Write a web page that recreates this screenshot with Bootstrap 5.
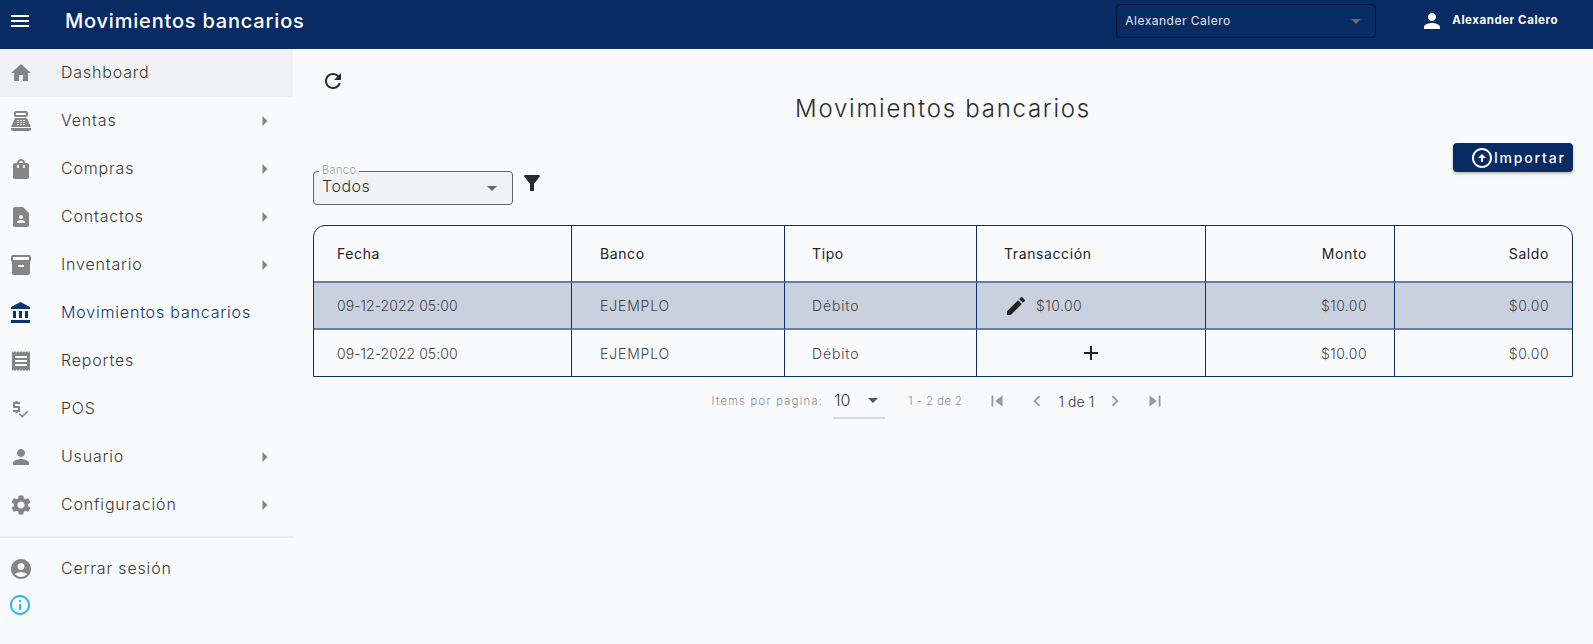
<!DOCTYPE html>
<html lang="es">
<head>
  <meta charset="UTF-8">
  <title>Movimientos bancarios</title>
  <link href="https://cdn.jsdelivr.net/npm/bootstrap@5.3.0/dist/css/bootstrap.min.css" rel="stylesheet">
  <style>
    html, body { height: 100%; overflow: hidden; }
    body { font-family: "Inter", "Open Sans", sans-serif; background: #f9fafc; color: #2b2b2b; font-weight: 300; }
    .ico { width: 24px; height: 24px; fill: currentColor; flex: none; }

    .topbar { height: 49px; background: #082b63; color: #fff; padding: 0 35px 7px 0; }
    .topbar-title { font-size: 20px; font-weight: 500; letter-spacing: .8px; margin-left: 33px; }
    .org-select { width: 260px; height: 34px; margin-right: 44px; padding: 0 14px 0 8px; background: transparent; border: 1px solid #04173a; border-radius: 4px; font-size: 12px; font-weight: 400; letter-spacing: .5px; color: #e3e7ee; }
    .org-select i { border: 5px solid transparent; border-top-color: #6d6d66; border-bottom: 0; }
    .user-name { font-size: 11.5px; font-weight: 700; letter-spacing: .55px; margin-left: 8px; }

    .shell { height: calc(100% - 49px); }
    .side { width: 293px; flex: none; }
    .side-item { height: 48px; padding: 0 22px 2px 9px; background: transparent; border: 0; border-radius: 0 !important; color: #3a3a3a; font-size: 16px; letter-spacing: .82px; gap: 28px; }
    .side-item .ico { color: #858585; margin-top: 2px; }
    .side-item .car { margin-left: auto; width: 20px; height: 20px; margin-right: -4px; }
    .side-item.is-hover { background: #f0f1f3; }
    .side-item.is-current, .side-item.is-current .ico { color: #0d3472; }
    .side-rule { border-top: 2px solid #eaebee; margin: 7px 0 7px; }
    .info-ico { color: #2bb6f6; margin: 0 0 0 8px; display: block; }

    .content { padding: 20px 20px 0; min-width: 0; }
    .refresh-ico { margin-left: 8px; }
    .page-title { font-size: 24px; font-weight: 300; letter-spacing: 1.75px; text-align: center; margin: 1px 0 0; line-height: 30px; }
    .btn-import { width: 120px; height: 29px; background: #082b63; color: #fff; border: 0; border-radius: 4px; box-shadow: 0 2px 3px rgba(0,0,0,.25); font-size: 14px; font-weight: 500; letter-spacing: 1.8px; padding: 0 4px 0 17px; gap: 0; margin-top: 19px; }
    .filter-row { margin-top: -8px; height: 48px; gap: 7px; }
    .filter-ico { margin-top: 7px; }
    .bank-box { position: relative; width: 200px; height: 34px; margin-top: 7px; }
    .bank-box label { position: absolute; top: -7px; left: 6px; padding: 0 3px; background: #f9fafc; font-size: 11px; line-height: 12px; color: #9c9c9c; letter-spacing: .4px; }
    .bank-select { height: 34px; padding: 2px 30px 6px 8px; font-size: 16px; font-weight: 300; letter-spacing: .5px; color: #333; background-color: #f0f3f6; border: 1px solid #666; border-radius: 4px; background-image: url("data:image/svg+xml,%3Csvg xmlns='http://www.w3.org/2000/svg' viewBox='0 0 10 5'%3E%3Cpath fill='%23666' d='M0 0l5 5 5-5z'/%3E%3C/svg%3E"); background-size: 10px 5px; background-position: right 15px center; }

    .grid-wrap { margin-top: 13px; border: 1px solid #0c2f69; border-radius: 12px 12px 0 0; overflow: hidden; }
    .grid-table { margin: 0; table-layout: fixed; --bs-table-bg: transparent; border-collapse: separate; border-spacing: 0; font-size: 14px; letter-spacing: .42px; }
    .grid-table th, .grid-table td { border: 0; border-right: 1px solid #0c2f69; vertical-align: middle; padding: 0 23px; color: #444; font-weight: 300; height: 46px; }
    .grid-table th { height: 57px; color: #222; font-weight: 400; letter-spacing: .6px; border-bottom: 2px solid #6b7fa4; }
    .grid-table th:last-child, .grid-table td:last-child { border-right: 0; }
    .grid-table .row-picked td { height: 47px; background: #c9d0de; border-bottom: 2px solid #6b7fa4; }
    .grid-table tr > :nth-child(2) { padding-left: 28px; }
    .grid-table tr > :nth-child(3), .grid-table tr > :nth-child(4) { padding-left: 27px; }
    .grid-table tr > :nth-child(4) { padding-right: 27px; }
    .grid-table tr > :nth-child(5) { padding-right: 27px; }
    .grid-table td:nth-child(1) { letter-spacing: .04px; }
    .grid-table td:nth-child(2), .grid-table td:nth-child(3) { letter-spacing: .85px; }
    .amount-edit { gap: 8px; }
    .amount-edit .ico { color: #222; }
    .add-ico { color: #222; display: block; margin: 0 auto; }

    .pager { height: 48px; padding-right: 8px; font-size: 11px; color: #8d8d8d; letter-spacing: 1.35px; }
    .pager-size { width: 52px; height: 36px; margin: 0 23px 0 10px; border-bottom: 2px solid #dcdcdc; font-size: 16px; color: #333; letter-spacing: 0; padding: 0 0 0 1px; }
    .pager-size i { border: 5px solid transparent; border-top-color: #555; border-bottom: 0; margin-right: 7px; }
    .pager-range { letter-spacing: .6px; }
    .pager-now { font-size: 14px; color: #333; letter-spacing: .1px; margin: 0 10px; }
    .pager .ico { width: 22px; height: 22px; color: #9a9a9a; }
    .pager .pager-gap { margin-left: 18px; }
  </style>
</head>
<body>
  <svg class="d-none">
    <symbol id="i-menu" viewBox="0 0 24 24"><path d="M3 18h18v-2H3v2zm0-5h18v-2H3v2zm0-7v2h18V6H3z"/></symbol>
    <symbol id="i-home" viewBox="0 0 24 24"><path d="M10 20v-6h4v6h5v-8h3L12 3 2 12h3v8z"/></symbol>
    <symbol id="i-pos" viewBox="0 0 24 24"><path d="M17 2H7c-1.100 0-2 .9-2 2v2c0 1.100.9 2 2 2h10c1.100 0 2-.9 2-2V4c0-1.100-.9-2-2-2zm0 4H7V4h10v2zm3 16H4c-1.100 0-2-.9-2-2v-1h20v1c0 1.100-.9 2-2 2zm-1.470-11.810C18.210 9.470 17.490 9 16.700 9H7.300c-.79 0-1.510.47-1.830 1.190L2 18h20l-3.470-7.810zM9.500 16h-1c-.28 0-.5-.22-.5-.5s.22-.5.500-.5h1c.28 0 .5.22.5.5s-.22.5-.5.500zm0-2h-1c-.28 0-.5-.22-.5-.5s.22-.5.500-.5h1c.28 0 .5.220.5.5s-.220.5-.5.500zm0-2h-1c-.28 0-.5-.22-.5-.5s.22-.5.500-.5h1c.28 0 .5.22.5.5s-.220.5-.5.5zm3 4h-1c-.28 0-.5-.22-.5-.5s.22-.5.500-.5h1c.28 0 .5.22.5.5s-.22.5-.5.5zm0-2h-1c-.28 0-.5-.22-.5-.5s.22-.5.500-.5h1c.28 0 .5.22.5.5s-.22.5-.5.5zm0-2h-1c-.28 0-.5-.22-.5-.5s.22-.5.500-.5h1c.28 0 .5.22.5.5s-.22.5-.5.5zm3 4h-1c-.28 0-.5-.22-.5-.5s.22-.5.500-.5h1c.28 0 .5.22.5.5s-.22.5-.5.5zm0-2h-1c-.28 0-.5-.22-.5-.5s.22-.5.500-.5h1c.28 0 .5.22.5.5s-.22.5-.5.5zm0-2h-1c-.28 0-.5-.22-.5-.5s.22-.5.500-.5h1c.28 0 .5.22.5.5s-.22.5-.5.5z"/></symbol>
    <symbol id="i-bag" viewBox="0 0 24 24"><path d="M18 6h-2c0-2.210-1.790-4-4-4S8 3.790 8 6H6c-1.100 0-2 .9-2 2v12c0 1.100.9 2 2 2h12c1.100 0 2-.9 2-2V8c0-1.100-.9-2-2-2zm-8 4c0 .55-.45 1-1 1s-1-.45-1-1V8h2v2zm2-6c1.100 0 2 .9 2 2h-4c0-1.100.9-2 2-2zm4 6c0 .55-.45 1-1 1s-1-.45-1-1V8h2v2z"/></symbol>
    <symbol id="i-contact" viewBox="0 0 24 24"><path d="M14 2H6c-1.100 0-1.990.9-1.990 2L4 20c0 1.100.89 2 1.990 2H18c1.100 0 2-.9 2-2V8l-6-6zm-2 8c1.100 0 2 .9 2 2s-.9 2-2 2-2-.9-2-2 .9-2 2-2zm4 8H8v-.57c0-.81.48-1.530 1.220-1.850.85-.37 1.790-.58 2.780-.58.99 0 1.930.21 2.780.58.74.32 1.220 1.040 1.220 1.850V18z"/></symbol>
    <symbol id="i-box" viewBox="0 0 24 24"><path d="M20 2H4c-1 0-2 .9-2 2v3.010c0 .72.43 1.340 1 1.690V20c0 1.100 1.100 2 2 2h14c.9 0 2-.9 2-2V8.700c.57-.35 1-.97 1-1.690V4c0-1.100-1-2-2-2zm-5 12H9v-2h6v2zm5-7H4V4l16-.02V7z"/></symbol>
    <symbol id="i-bank" viewBox="0 0 24 24"><path d="M4 10v7h3v-7H4zm6 0v7h3v-7h-3zM2 22h19v-3H2v3zm14-12v7h3v-7h-3zm-4.500-9L2 6v2h19V6l-9.500-5z"/></symbol>
    <symbol id="i-receipt" viewBox="0 0 24 24"><path d="M18 17H6v-2h12v2zm0-4H6v-2h12v2zm0-4H6V7h12v2zM3 22l1.500-1.500L6 22l1.500-1.500L9 22l1.500-1.500L12 22l1.500-1.500L15 22l1.500-1.500L18 22l1.500-1.500L21 22V2l-1.500 1.500L18 2l-1.500 1.500L15 2l-1.500 1.500L12 2l-1.500 1.500L9 2 7.500 3.500 6 2 4.500 3.500 3 2v20z"/></symbol>
    <symbol id="i-price" viewBox="0 0 24 24"><path d="M11 13c0-.55-.45-1-1-1H6v-2h5V8H8.500V7h-2v1H5c-.55 0-1 .45-1 1v4c0 .55.45 1 1 1h4v2H4v2h2.500v1h2v-1H10c.55 0 1-.45 1-1v-4z" transform="translate(0 -3)"/><path d="M19.590 12.520l-5.660 5.660-2.830-2.830-1.410 1.410L13.930 21 21 13.930l-1.410-1.410z" transform="translate(1.500 3) scale(.85)"/></symbol>
    <symbol id="i-person" viewBox="0 0 24 24"><path d="M12 12c2.210 0 4-1.790 4-4s-1.790-4-4-4-4 1.790-4 4 1.790 4 4 4zm0 2c-2.670 0-8 1.340-8 4v2h16v-2c0-2.660-5.330-4-8-4z"/></symbol>
    <symbol id="i-gear" viewBox="0 0 24 24"><path d="M19.140 12.940c.04-.3.06-.61.06-.94 0-.32-.02-.64-.07-.94l2.030-1.580c.18-.14.23-.41.12-.61l-1.920-3.320c-.12-.22-.37-.29-.59-.22l-2.390.96c-.5-.38-1.030-.7-1.620-.94l-.36-2.540c-.04-.24-.24-.41-.48-.41h-3.840c-.24 0-.43.17-.47.41l-.36 2.540c-.59.24-1.130.57-1.620.94l-2.390-.96c-.22-.08-.47 0-.59.22L2.740 8.870c-.12.21-.08.47.12.61l2.030 1.580c-.05.3-.09.63-.09.94s.02.64.07.94l-2.030 1.580c-.18.14-.23.41-.12.61l1.920 3.320c.12.22.37.29.59.22l2.390-.96c.5.38 1.030.7 1.620.94l.36 2.540c.05.24.24.41.48.41h3.840c.24 0 .44-.17.47-.41l.36-2.540c.59-.24 1.130-.56 1.620-.94l2.390.96c.22.08.47 0 .59-.22l1.920-3.320c.12-.22.07-.47-.12-.61l-2.010-1.580zM12 15.600c-1.980 0-3.600-1.620-3.600-3.600s1.620-3.600 3.600-3.600 3.600 1.620 3.600 3.600-1.620 3.600-3.600 3.600z"/></symbol>
    <symbol id="i-account" viewBox="0 0 24 24"><path d="M12 2C6.480 2 2 6.480 2 12s4.480 10 10 10 10-4.480 10-10S17.520 2 12 2zm0 4c1.930 0 3.500 1.570 3.500 3.500S13.930 13 12 13s-3.500-1.570-3.500-3.500S10.070 6 12 6zm0 14c-2.030 0-4.430-.82-6.140-2.880C7.550 15.800 9.680 15 12 15s4.450.8 6.140 2.120C16.430 19.180 14.030 20 12 20z"/></symbol>
    <symbol id="i-info" viewBox="0 0 24 24"><path d="M11 7h2v2h-2zm0 4h2v6h-2zm1-9C6.480 2 2 6.480 2 12s4.480 10 10 10 10-4.480 10-10S17.520 2 12 2zm0 18c-4.410 0-8-3.590-8-8s3.590-8 8-8 8 3.590 8 8-3.590 8-8 8z"/></symbol>
    <symbol id="i-refresh" viewBox="0 0 24 24"><path d="M17.650 6.350C16.200 4.900 14.210 4 12 4c-4.420 0-7.990 3.580-7.990 8s3.570 8 7.990 8c3.730 0 6.840-2.550 7.730-6h-2.080c-.82 2.330-3.040 4-5.650 4-3.310 0-6-2.690-6-6s2.690-6 6-6c1.660 0 3.140.69 4.220 1.780L13 11h7V4l-2.350 2.350z"/></symbol>
    <symbol id="i-filter" viewBox="0 0 24 24"><path d="M4.250 5.610C6.270 8.200 10 13 10 13v6c0 .55.45 1 1 1h2c.55 0 1-.45 1-1v-6s3.720-4.800 5.740-7.390c.51-.66.04-1.610-.79-1.610H5.040c-.83 0-1.300.95-.79 1.610z"/></symbol>
    <symbol id="i-edit" viewBox="0 0 24 24"><path d="M3 17.250V21h3.750L17.810 9.940l-3.750-3.750L3 17.250zM20.710 7.040c.39-.39.39-1.020 0-1.410l-2.340-2.340c-.39-.39-1.020-.39-1.410 0l-1.830 1.830 3.750 3.750 1.830-1.830z"/></symbol>
    <symbol id="i-add" viewBox="0 0 24 24"><path d="M19 13h-6v6h-2v-6H5v-2h6V5h2v6h6v2z"/></symbol>
    <symbol id="i-upload" viewBox="0 0 24 24"><path d="M12 20c-4.410 0-8-3.590-8-8s3.590-8 8-8 8 3.590 8 8-3.590 8-8 8m0 2c5.520 0 10-4.480 10-10S17.520 2 12 2 2 6.480 2 12s4.480 10 10 10zm-1-10v4h2v-4h3l-4-4-4 4h3z"/></symbol>
    <symbol id="i-first" viewBox="0 0 24 24"><path d="M6 6h2v12H6zM18 6v12l-8-6z"/></symbol>
    <symbol id="i-last" viewBox="0 0 24 24"><path d="M16 6h2v12h-2zM6 6v12l8-6z"/></symbol>
    <symbol id="i-prev" viewBox="0 0 24 24"><path d="M15.410 7.410L14 6l-6 6 6 6 1.410-1.410L10.830 12z"/></symbol>
    <symbol id="i-next" viewBox="0 0 24 24"><path d="M10 6L8.590 7.410 13.170 12l-4.580 4.590L10 18l6-6z"/></symbol>
    <symbol id="i-caret" viewBox="0 0 24 24"><path d="M9 18l6-6-6-6v12z"/></symbol>
  </svg>

  <!-- Top bar -->
  <nav class="navbar topbar d-flex align-items-center flex-nowrap">
    <div class="d-flex align-items-center ps-2">
      <svg class="ico"><use href="#i-menu"/></svg>
      <span class="topbar-title">Movimientos bancarios</span>
    </div>
    <div class="d-flex align-items-center">
      <div class="org-select d-flex align-items-center justify-content-between">
        <span>Alexander Calero</span><i></i>
      </div>
      <svg class="ico"><use href="#i-person"/></svg>
      <span class="user-name">Alexander Calero</span>
    </div>
  </nav>

  <div class="shell d-flex">
    <!-- Sidebar -->
    <aside class="side">
      <div class="list-group list-group-flush bg-transparent">
        <a class="list-group-item side-item is-hover d-flex align-items-center"><svg class="ico"><use href="#i-home"/></svg>Dashboard</a>
        <a class="list-group-item side-item d-flex align-items-center"><svg class="ico"><use href="#i-pos"/></svg>Ventas<svg class="ico car"><use href="#i-caret"/></svg></a>
        <a class="list-group-item side-item d-flex align-items-center"><svg class="ico"><use href="#i-bag"/></svg>Compras<svg class="ico car"><use href="#i-caret"/></svg></a>
        <a class="list-group-item side-item d-flex align-items-center"><svg class="ico"><use href="#i-contact"/></svg>Contactos<svg class="ico car"><use href="#i-caret"/></svg></a>
        <a class="list-group-item side-item d-flex align-items-center"><svg class="ico"><use href="#i-box"/></svg>Inventario<svg class="ico car"><use href="#i-caret"/></svg></a>
        <a class="list-group-item side-item is-current d-flex align-items-center"><svg class="ico"><use href="#i-bank"/></svg>Movimientos bancarios</a>
        <a class="list-group-item side-item d-flex align-items-center"><svg class="ico"><use href="#i-receipt"/></svg>Reportes</a>
        <a class="list-group-item side-item d-flex align-items-center"><svg class="ico"><use href="#i-price"/></svg>POS</a>
        <a class="list-group-item side-item d-flex align-items-center"><svg class="ico"><use href="#i-person"/></svg>Usuario<svg class="ico car"><use href="#i-caret"/></svg></a>
        <a class="list-group-item side-item d-flex align-items-center"><svg class="ico"><use href="#i-gear"/></svg>Configuración<svg class="ico car"><use href="#i-caret"/></svg></a>
      </div>
      <div class="side-rule"></div>
      <a class="list-group-item side-item d-flex align-items-center"><svg class="ico"><use href="#i-account"/></svg>Cerrar sesión</a>
      <svg class="ico info-ico"><use href="#i-info"/></svg>
    </aside>

    <!-- Main -->
    <main class="content flex-grow-1">
      <svg class="ico d-block refresh-ico"><use href="#i-refresh"/></svg>
      <h1 class="page-title">Movimientos bancarios</h1>
      <div class="d-flex justify-content-end">
        <button class="btn-import d-flex align-items-center" type="button"><svg class="ico"><use href="#i-upload"/></svg>Importar</button>
      </div>
      <div class="filter-row d-flex align-items-start">
        <div class="bank-box">
          <label for="bank">Banco</label>
          <select class="form-select bank-select" id="bank"><option>Todos</option></select>
        </div>
        <svg class="ico filter-ico"><use href="#i-filter"/></svg>
      </div>

      <div class="grid-wrap">
        <table class="table grid-table">
          <colgroup>
            <col style="width:258px"><col style="width:213px"><col style="width:192px"><col style="width:229px"><col style="width:189px"><col>
          </colgroup>
          <thead>
            <tr><th>Fecha</th><th>Banco</th><th>Tipo</th><th>Transacción</th><th class="text-end">Monto</th><th class="text-end">Saldo</th></tr>
          </thead>
          <tbody>
            <tr class="row-picked">
              <td>09-12-2022 05:00</td><td>EJEMPLO</td><td>Débito</td>
              <td><span class="amount-edit d-flex align-items-center"><svg class="ico"><use href="#i-edit"/></svg>$10.00</span></td>
              <td class="text-end">$10.00</td><td class="text-end">$0.00</td>
            </tr>
            <tr>
              <td>09-12-2022 05:00</td><td>EJEMPLO</td><td>Débito</td>
              <td><svg class="ico add-ico"><use href="#i-add"/></svg></td>
              <td class="text-end">$10.00</td><td class="text-end">$0.00</td>
            </tr>
          </tbody>
        </table>
      </div>

      <div class="pager d-flex align-items-center justify-content-center">
        <span>Items por pagina:</span>
        <div class="pager-size d-flex align-items-center justify-content-between"><span>10</span><i></i></div>
        <span class="me-4 pager-range">1 - 2 de 2</span>
        <svg class="ico"><use href="#i-first"/></svg>
        <svg class="ico pager-gap"><use href="#i-prev"/></svg>
        <span class="pager-now">1 de 1</span>
        <svg class="ico"><use href="#i-next"/></svg>
        <svg class="ico pager-gap"><use href="#i-last"/></svg>
      </div>
    </main>
  </div>
</body>
</html>
